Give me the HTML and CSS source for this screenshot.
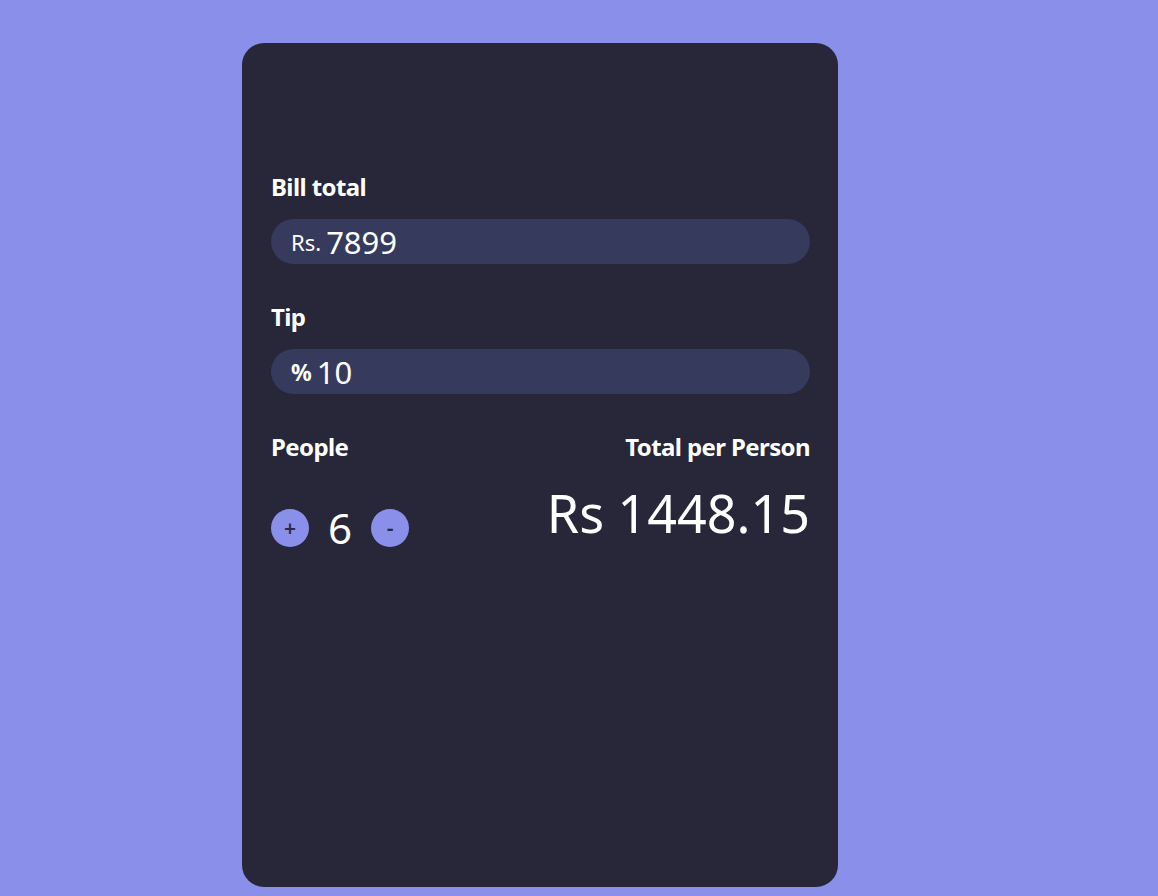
FILE: index.html
```html
<!DOCTYPE html>
<html>
<head>
<meta charset="utf-8">
<link rel="stylesheet" href="styles.css">
</head>
<body>
<main class="card">
  <section class="field">
    <label class="label">Bill total</label>
    <div class="input">
      <span class="prefix">Rs.</span><span class="value">7899</span>
    </div>
  </section>
  <section class="field">
    <label class="label">Tip</label>
    <div class="input">
      <span class="prefix pct">%</span><span class="value">10</span>
    </div>
  </section>
  <section class="bottom">
    <div class="people">
      <div class="label">People</div>
      <div class="counter">
        <button class="btn">+</button>
        <span class="count">6</span>
        <button class="btn">-</button>
      </div>
    </div>
    <div class="total">
      <div class="label">Total per Person</div>
      <div class="amount">Rs 1448.15</div>
    </div>
  </section>
</main>
</body>
</html>
```
FILE: styles.css
```css
html, body {
  margin: 0;
  padding: 0;
  background: #8a8fea;
  height: 100%;
}
body {
  font-family: "Noto Sans", "Open Sans", sans-serif;
  color: #ffffff;
  padding: 43px 0 0 242px;
  box-sizing: border-box;
}
.card {
  width: 596px;
  height: 844px;
  box-sizing: border-box;
  background: #272739;
  border-radius: 22px;
  padding: 128px 28px 0 29px;
}
.field {
  margin-bottom: 37px;
}
.label {
  display: block;
  font-weight: 700;
  font-size: 24px;
  line-height: 32px;
  letter-spacing: -0.6px;
  margin-bottom: 16px;
}
.input {
  height: 45px;
  border-radius: 23px;
  background: #363a5c;
  display: flex;
  align-items: center;
  padding-left: 20px;
}
.prefix {
  font-size: 22px;
  margin-right: 5px;
  margin-top: 1px;
}
.pct {
  font-weight: 700;
  font-size: 23px;
}
.value {
  font-size: 31px;
}
.bottom {
  display: flex;
  justify-content: space-between;
  margin-top: 2px;
}
.counter {
  display: flex;
  align-items: center;
  margin-top: 40px;
}
.btn {
  width: 38px;
  height: 38px;
  border-radius: 50%;
  border: none;
  background: #8a8fea;
  color: #2a2a40;
  font-family: "Noto Sans", "Open Sans", sans-serif;
  font-size: 21px;
  font-weight: 600;
  padding: 0;
  display: flex;
  align-items: center;
  justify-content: center;
}
.count {
  font-size: 42px;
  line-height: 50px;
  width: 62px;
  text-align: center;
}
.total {
  text-align: right;
}
.amount {
  font-size: 52px;
  line-height: 68px;
  margin-top: 3px;
}
```
